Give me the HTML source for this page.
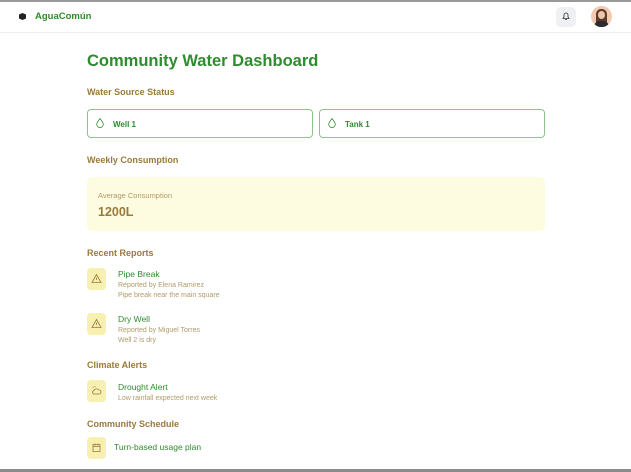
<!DOCTYPE html>
<html><head><meta charset="utf-8"><style>
*{margin:0;padding:0;box-sizing:border-box}
body{width:631px;height:472px;overflow:hidden;background:#fff;font-family:"Liberation Sans",sans-serif;position:relative}
.a{position:absolute;white-space:nowrap}
.h{color:#9a7a3a;font-size:9px;font-weight:bold}
.g{color:#2e8b2e}
.s{color:#b09a6a;font-size:7px}
.ib{position:absolute;width:19px;height:22px;background:#f7f0b0;border-radius:4px;left:87px}
.ib svg{position:absolute;left:4px;top:5px}
</style></head><body>
<div class="a" style="left:0;top:0;width:631px;height:2px;background:#999"></div>
<div class="a" style="left:0;top:32px;width:631px;height:1px;background:#eee"></div>
<div class="a" style="left:0;top:469px;width:631px;height:3px;background:#8a8a8a"></div>
<svg class="a" style="left:19px;top:13px" width="7" height="7" viewBox="0 0 7 7"><path d="M3.5 0L7 1.5V5.5L3.5 7L0 5.5V1.5Z" fill="#222"/></svg>
<div class="a g" style="left:35px;top:11px;font-size:9.5px;font-weight:bold">AguaComún</div>
<div class="a" style="left:556px;top:7px;width:20px;height:20px;border-radius:5px;background:#eef0f3"></div>
<svg class="a" style="left:562px;top:12px" width="8" height="9" viewBox="0 0 8 9"><path d="M1 6.5h6L6 5V3a2 2 0 0 0-4 0v2z M3 7.5h2" fill="none" stroke="#333" stroke-width=".8"/></svg>
<div class="a" style="left:591px;top:6px;width:21px;height:21px;border-radius:50%;background:#f2c8b0;overflow:hidden"><div style="position:absolute;left:5px;top:3px;width:11px;height:18px;border-radius:5px 5px 0 0;background:#5a3a2a"></div><div style="position:absolute;left:7px;top:5px;width:7px;height:8px;border-radius:50%;background:#f0c4a8"></div><div style="position:absolute;left:3px;top:15px;width:15px;height:8px;border-radius:6px 6px 0 0;background:#2a2a30"></div></div>
<div class="a g" style="left:87px;top:52px;font-size:16.5px;font-weight:bold">Community Water Dashboard</div>
<div class="a h" style="left:87px;top:87px">Water Source Status</div>
<div class="a" style="left:87px;top:109px;width:226px;height:29px;border:1px solid #8cc48c;border-radius:4px"></div>
<div class="a" style="left:319px;top:109px;width:226px;height:29px;border:1px solid #8cc48c;border-radius:4px"></div>
<svg class="a" style="left:96px;top:118px" width="8" height="10" viewBox="0 0 8 10"><path d="M4 .5C2 3 .7 4.5.7 6.3a3.3 3.3 0 0 0 6.6 0C7.3 4.5 6 3 4 .5z" fill="none" stroke="#2e8b2e" stroke-width=".8"/></svg>
<svg class="a" style="left:328px;top:118px" width="8" height="10" viewBox="0 0 8 10"><path d="M4 .5C2 3 .7 4.5.7 6.3a3.3 3.3 0 0 0 6.6 0C7.3 4.5 6 3 4 .5z" fill="none" stroke="#2e8b2e" stroke-width=".8"/></svg>
<div class="a g" style="left:113px;top:120px;font-size:8px;font-weight:bold">Well 1</div>
<div class="a g" style="left:345px;top:120px;font-size:8px;font-weight:bold">Tank 1</div>
<div class="a h" style="left:87px;top:155px">Weekly Consumption</div>
<div class="a" style="left:87px;top:177px;width:458px;height:54px;background:#fdfce0;border-radius:5px"></div>
<div class="a s" style="left:98px;top:191px;font-size:7.5px">Average Consumption</div>
<div class="a" style="left:98px;top:205px;font-size:12.5px;font-weight:bold;color:#9a7a3a">1200L</div>
<div class="a h" style="left:87px;top:248px">Recent Reports</div>
<div class="ib" style="top:268px"><svg width="11" height="11" viewBox="0 0 11 11"><path d="M5.5 1.5L10 9.5H1z M5.5 4.5v2.5 M5.5 8v.3" fill="none" stroke="#9a7a3a" stroke-width=".8"/></svg></div>
<div class="a g" style="left:118px;top:269px;font-size:8.5px">Pipe Break</div>
<div class="a s" style="left:118px;top:282px">Reported by Elena Ramirez</div>
<div class="a s" style="left:118px;top:292px">Pipe break near the main square</div>
<div class="ib" style="top:313px"><svg width="11" height="11" viewBox="0 0 11 11"><path d="M5.5 1.5L10 9.5H1z M5.5 4.5v2.5 M5.5 8v.3" fill="none" stroke="#9a7a3a" stroke-width=".8"/></svg></div>
<div class="a g" style="left:118px;top:314px;font-size:8.5px">Dry Well</div>
<div class="a s" style="left:118px;top:327px">Reported by Miguel Torres</div>
<div class="a s" style="left:118px;top:337px">Well 2 is dry</div>
<div class="a h" style="left:87px;top:360px">Climate Alerts</div>
<div class="ib" style="top:380px"><svg width="11" height="11" viewBox="0 0 11 11"><path d="M3 9h5a2 2 0 0 0 0-4 3 3 0 0 0-5 0.5A1.8 1.8 0 0 0 3 9z M2 2l.7.7 M4 1v1" fill="none" stroke="#9a7a3a" stroke-width=".8"/></svg></div>
<div class="a g" style="left:118px;top:382px;font-size:8.5px">Drought Alert</div>
<div class="a s" style="left:118px;top:395px">Low rainfall expected next week</div>
<div class="a h" style="left:87px;top:419px">Community Schedule</div>
<div class="ib" style="top:437px"><svg width="11" height="11" viewBox="0 0 11 11"><path d="M2 2.5h7v7H2z M2 4.5h7 M4 1.5v2 M7 1.5v2" fill="none" stroke="#9a7a3a" stroke-width=".8"/></svg></div>
<div class="a g" style="left:114px;top:442px;font-size:8.5px">Turn-based usage plan</div>
</body></html>
